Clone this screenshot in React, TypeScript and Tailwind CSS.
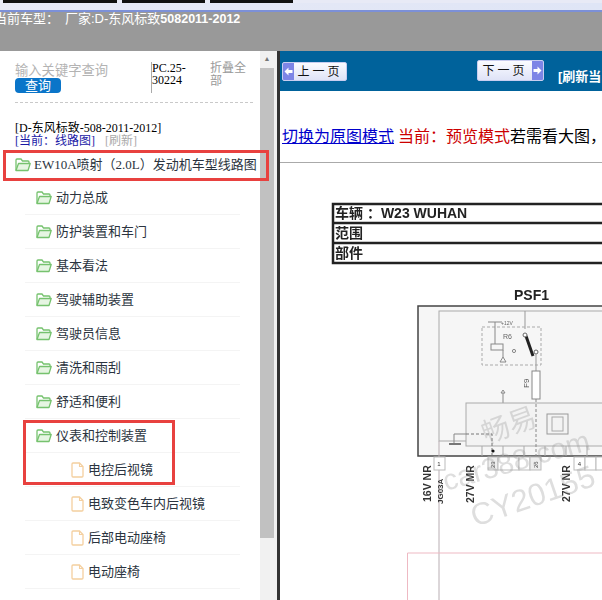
const cjk = "font-['Liberation_Serif','Noto_Sans_CJK_SC',serif]";

function FolderIcon() {
  return (
    <svg width="16" height="14" viewBox="0 0 16 14" fill="none" className="shrink-0">
      <path d="M1 12.500V2a1 1 0 0 1 1-1h4l1.500 2H13a1 1 0 0 1 1 1v1.500" stroke="#76c26e" strokeWidth="1.300" />
      <path d="M1 12.500 3.500 5.500H15.200L13 12.500Z" fill="#e6f5e2" stroke="#76c26e" strokeWidth="1.300" strokeLinejoin="round" />
    </svg>
  );
}

function FileIcon() {
  return (
    <svg width="13" height="16" viewBox="0 0 13 16" fill="none" className="shrink-0">
      <path d="M1 2a1 1 0 0 1 1-1h6.500L12 4.500V14a1 1 0 0 1-1 1H2a1 1 0 0 1-1-1Z" fill="#fff" stroke="#f4cf9f" strokeWidth="1.300" />
      <path d="M8.500 1v3.500H12" stroke="#f4cf9f" strokeWidth="1.100" />
    </svg>
  );
}

const folders = ["动力总成", "防护装置和车门", "基本看法", "驾驶辅助装置", "驾驶员信息", "清洗和雨刮", "舒适和便利", "仪表和控制装置"];
const files = ["电控后视镜", "电致变色车内后视镜", "后部电动座椅", "电动座椅"];

function Row({ label, kind }: { label: string; kind: "folder" | "file" }) {
  return (
    <div className={`ml-[25px] flex h-[34px] w-[215px] items-center border-b border-[#f4f4f4] ${kind === "folder" ? "gap-[4px] pl-[11px]" : "gap-[4px] pl-[46px]"}`}>
      {kind === "folder" ? <FolderIcon /> : <FileIcon />}
      <span className="text-[13px] leading-none whitespace-nowrap text-[#2b3440]">{label}</span>
    </div>
  );
}

function Arrow({ dir }: { dir: "left" | "right" }) {
  return (
    <span className="flex h-full w-[11px] shrink-0 items-center justify-center bg-[#7d85e6]">
      <svg width="9" height="9" viewBox="0 0 9 9">
        <path d={dir === "left" ? "M0.500 4.500 4.500 0.500V3H8.500V6H4.500V8.500Z" : "M8.500 4.500 4.500 0.500V3H0.500V6H4.500V8.500Z"} fill="#fff" />
      </svg>
    </span>
  );
}

function NavButton({ label, dir, className }: { label: string; dir: "left" | "right"; className: string }) {
  return (
    <div className={`flex items-center overflow-hidden rounded-[2px] border border-[#c8cdf0] bg-gradient-to-b from-[#fbfcff] to-[#dfe3f7] text-[12px] leading-none text-[#111] ${className}`}>
      {dir === "left" && <Arrow dir="left" />}
      <span className="flex-1 text-center whitespace-nowrap tracking-[3px]">{label}</span>
      {dir === "right" && <Arrow dir="right" />}
    </div>
  );
}

function Diagram() {
  return (
    <svg viewBox="280 163 322 437" width="322" height="437" className="block blur-[0.35px]" fontFamily="'Liberation Sans','Noto Sans CJK SC',sans-serif">
      <rect x="333" y="204" width="280" height="59" fill="#fff" stroke="#222" strokeWidth="2.500" />
      <line x1="333" y1="223" x2="602" y2="223" stroke="#222" strokeWidth="2.500" />
      <line x1="333" y1="243" x2="602" y2="243" stroke="#222" strokeWidth="2.500" />
      <text x="335" y="218" fontSize="14" fontWeight="700" fill="#222">车辆 ：W23 WUHAN</text>
      <text x="335" y="238" fontSize="14" fontWeight="700" fill="#222">范围</text>
      <text x="335" y="258" fontSize="14" fontWeight="700" fill="#222">部件</text>
      <text x="514" y="300" fontSize="14" fontWeight="700" fill="#222">PSF1</text>

      <rect x="418" y="306" width="190" height="150" fill="#f6f6f6" stroke="#444" strokeWidth="1.500" />
      <rect x="439" y="311" width="170" height="130" fill="none" stroke="#aaa" />
      <path d="M525 311v18" stroke="#999" fill="none" />
      <rect x="482" y="327" width="59" height="38" fill="none" stroke="#aaa" strokeDasharray="3 2" />
      <path d="M488 322h14M495 322v22" stroke="#888" fill="none" />
      <text x="501" y="325" fontSize="5" fill="#666">+12V</text>
      <text x="503" y="339" fontSize="7" fill="#666">R6</text>
      <rect x="491" y="344" width="12" height="6" fill="none" stroke="#888" />
      <path d="M503 350v7l-3 5h6l-3-5" fill="none" stroke="#888" />
      <path d="M526 336 533 356" stroke="#222" strokeWidth="3" />
      <circle cx="525" cy="335" r="2" fill="#fff" stroke="#666" />
      <circle cx="536" cy="352" r="2" fill="#fff" stroke="#666" />
      <circle cx="514" cy="351" r="1.600" fill="none" stroke="#888" />
      <path d="M536 354v17" stroke="#999" fill="none" />
      <rect x="532" y="371" width="8" height="28" fill="#fff" stroke="#888" />
      <text x="529" y="388" fontSize="8" fill="#555" transform="rotate(-90 529 388)">F9</text>
      <path d="M503 403v-10l-2 0 2-3 2 3-2 0" fill="none" stroke="#888" />
      <rect x="466" y="403" width="143" height="43" fill="#f3f3f3" stroke="#aaa" />
      <rect x="547" y="414" width="21" height="20" fill="none" stroke="#999" />
      <rect x="552" y="417" width="11" height="14" fill="none" stroke="#aaa" />
      <path d="M454 434h12M454 434v10" stroke="#888" fill="none" />
      <path d="M466 434h26v22" stroke="#777" strokeDasharray="3 2" fill="none" />
      <path d="M449 444h12" stroke="#777" strokeWidth="2" />
      <circle cx="493" cy="451" r="1.600" fill="#111" />
      <path d="M536 399v57" stroke="#888" strokeDasharray="3 2" fill="none" />
      <path d="M482 446v10M503 446v10M524 446v10M545 446v10M566 446v10M587 446v10" stroke="#aaa" />

      <path d="M439 441V600" stroke="#b9aeb3" />
      <rect x="434" y="457" width="11" height="13" fill="#fff" stroke="#bbb" />
      <text x="439" y="466" fontSize="6" textAnchor="middle" fill="#333">1</text>
      <g stroke="#bbb" fill="#eee">
        <rect x="488" y="457" width="10" height="13" />
        <rect x="498" y="457" width="21" height="13" fill="#fff" />
        <rect x="519" y="457" width="11" height="13" fill="#fff" />
        <rect x="530" y="457" width="11" height="13" />
        <rect x="574" y="457" width="11" height="13" fill="#fff" />
        <rect x="585" y="457" width="11" height="13" fill="#fff" />
        <rect x="596" y="457" width="11" height="13" fill="#fff" />
      </g>
      <text x="495" y="468" fontSize="6" fill="#444" transform="rotate(-90 495 468)">23</text>
      <text x="538" y="468" fontSize="6" fill="#444" transform="rotate(-90 538 468)">26</text>
      <text x="579.500" y="466" fontSize="6" textAnchor="middle" fill="#333">4</text>
      <g fontWeight="700" fill="#333" fontSize="10.500">
        <text x="431" y="502" transform="rotate(-90 431 502)">16V NR</text>
        <text x="474" y="503" transform="rotate(-90 474 503)">27V MR</text>
        <text x="570" y="502" transform="rotate(-90 570 502)">27V NR</text>
        <text x="443" y="504" fontSize="8" transform="rotate(-90 443 504)">JG03A</text>
      </g>
      <path d="M407.500 553H602M407.500 553V600" stroke="#eeb9c3" fill="none" />

      <g fill="#999" opacity="0.32">
        <text fontSize="28" transform="translate(486 444) rotate(-20)">畅易</text>
        <text fontSize="29" transform="translate(446 491) rotate(-16)">car388.com</text>
        <text fontSize="31" transform="translate(475 527) rotate(-19)">CY20155</text>
      </g>
    </svg>
  );
}

export default function App() {
  return (
    <div className={`flex h-[600px] w-[602px] flex-col overflow-hidden bg-white ${cjk}`}>
      <div className="flex h-[3px] shrink-0 gap-[5px] bg-[#e8eaf6] pl-[3px]">
        <div className="w-[114px] bg-[#111]" />
        <div className="w-[83px] bg-[#111]" />
        <div className="w-[83px] bg-[#111]" />
      </div>
      <div className="h-[7px] shrink-0 bg-gradient-to-r from-[#e8eaf6] to-[#dfe5f6]" />
      <div className="h-[2px] shrink-0 bg-[#7c90d8]" />
      <div className="h-[39px] shrink-0 overflow-hidden bg-[#999999]">
        <div className="-ml-[6px] flex h-[14px] items-center text-[13px] leading-[14px] whitespace-nowrap text-white font-['Liberation_Sans','Noto_Sans_CJK_SC',sans-serif]">
          <span className="w-[71px]">当前车型：</span>
          <span>厂家:D-东风标致</span>
          <span className="text-[12.500px] font-bold">5082011-2012</span>
        </div>
      </div>

      <div className="flex min-h-0 flex-1">
        <div className="relative flex w-[277px] shrink-0">
          <div className="w-[260px] shrink-0 overflow-hidden">
            <div className="ml-[15px] flex h-[52px] w-[238px] items-start border-b border-dashed border-[#c9c9c9] pt-[11px]">
              <div className="w-[136px] shrink-0 pt-[2px]">
                <div className="text-[13.300px] leading-[14px] whitespace-nowrap text-[#b3b3b3]">输入关键字查询</div>
                <div className="flex h-[15px] w-[46px] items-center justify-center rounded-[4px] bg-[#0a75c9] text-[13px] leading-none text-white">查询</div>
              </div>
              <div className="h-[31px] w-[59px] shrink-0 border-l border-[#aaa] text-[12px] leading-[12px] text-black">PC.25-<br />30224</div>
              <div className="w-[38px] shrink-0 text-[12px] leading-[13px] text-[#999]">折叠全部</div>
            </div>
            <div className="mt-[19px] ml-[15px] text-[12px] leading-[13px] whitespace-nowrap text-black">[D-东风标致-508-2011-2012]</div>
            <div className="ml-[15px] flex text-[12px] leading-[13px] whitespace-nowrap">
              <span className="text-[#1a1aa6]">[当前：线路图]</span>
              <span className="ml-[10px] text-[#aaa]">[刷新]</span>
            </div>
            <div className="ml-[15px] flex h-[33px] items-center gap-[3px]">
              <FolderIcon />
              <span className="text-[13px] leading-none whitespace-nowrap text-[#2b3440]">EW10A喷射（2.0L）发动机车型线路图</span>
            </div>
            {folders.map((f) => <Row key={f} label={f} kind="folder" />)}
            {files.map((f) => <Row key={f} label={f} kind="file" />)}
          </div>
          <div className="flex w-[14px] shrink-0 flex-col bg-[#f1f1f1]">
            <div className="flex h-[17px] items-center justify-center text-[7px] leading-none text-[#777]">▲</div>
            <div className="h-[470px] bg-[#c1c1c1]" />
          </div>
          <div className="w-[3px] shrink-0 bg-[#f1f1f1]" />
          <div className="pointer-events-none absolute top-[99px] left-[3px] h-[31px] w-[266px] border-[3px] border-[#e8413f]" />
          <div className="pointer-events-none absolute top-[369px] left-[23px] h-[65px] w-[152px] border-[3px] border-[#e8413f]" />
        </div>

        <div className="w-[3px] shrink-0 bg-[#333]" />

        <div className="min-w-0 flex-1 overflow-hidden">
          <div className="flex h-[40px] bg-[#00629b]">
            <NavButton label="上一页" dir="left" className="mt-[11px] ml-[2px] h-[19px] w-[65px]" />
            <NavButton label="下一页" dir="right" className="mt-[9px] ml-[130px] h-[21px] w-[67px]" />
            <div className="mt-[18px] ml-[14px] text-[13px] leading-[16px] font-bold whitespace-nowrap text-white font-['Liberation_Sans','Noto_Sans_CJK_SC',sans-serif]">[刷新当</div>
          </div>
          <div className="flex h-[72px] w-[322px] items-end border-b border-[#aaa] pb-[17px] pl-[2px] text-[16px] leading-[16px] whitespace-nowrap">
            <a className="text-[#0000cc] underline">切换为原图模式</a>
            <span className="ml-[4px] text-[#cc0000]">当前：预览模式</span>
            <span className="text-black">若需看大图，</span>
          </div>
          <Diagram />
        </div>
      </div>
    </div>
  );
}
